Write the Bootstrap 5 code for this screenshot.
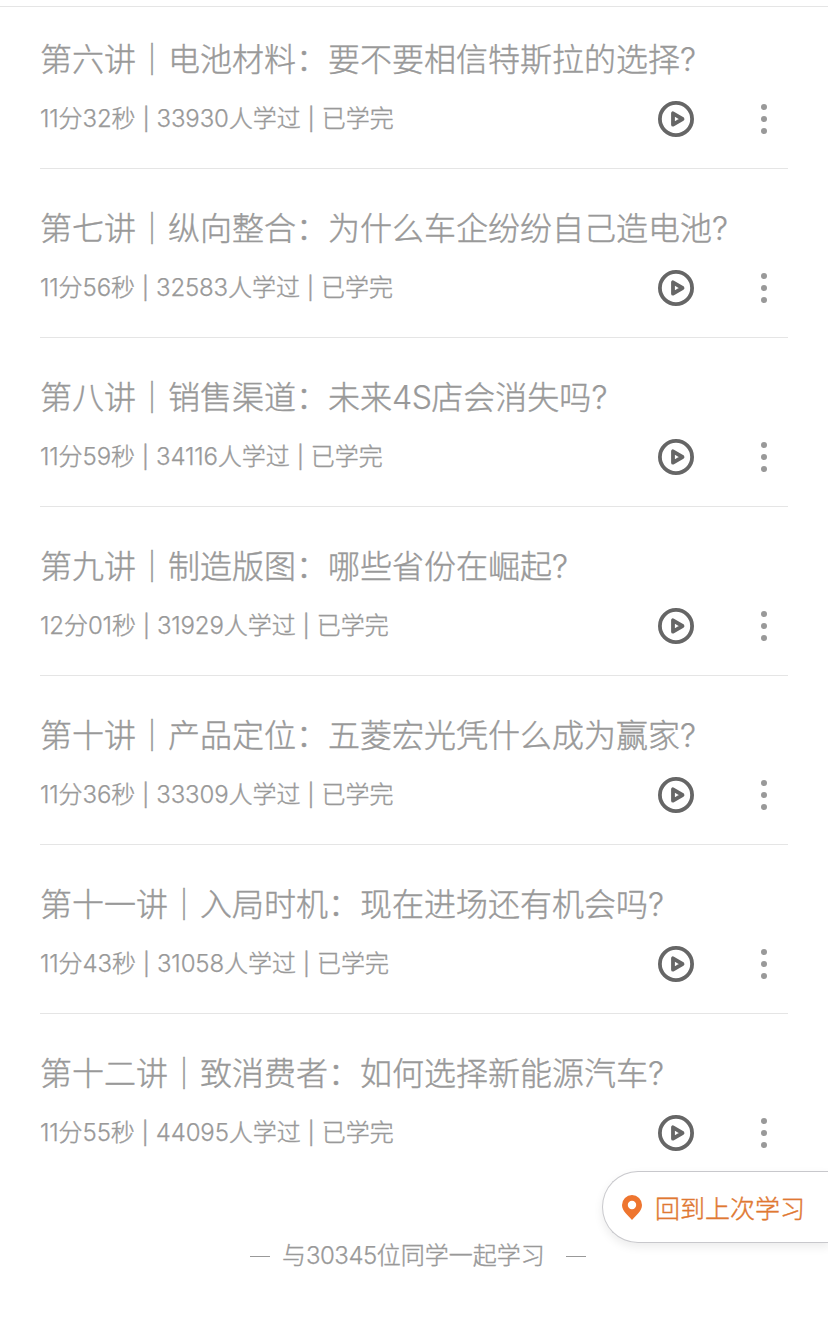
<!DOCTYPE html>
<html lang="zh-CN">
<head>
<meta charset="utf-8">
<meta name="viewport" content="width=device-width, initial-scale=1">
<title>课程目录</title>
<link rel="stylesheet" href="https://cdn.jsdelivr.net/npm/bootstrap@5.3.0/dist/css/bootstrap.min.css">
<style>
body{font-family:"Noto Sans CJK SC",sans-serif;font-weight:300;-webkit-text-stroke:.4px currentColor;color:#999;background:#fff;overflow-x:hidden}
.page{min-height:1342px;padding-top:6px}
.lessons{border-top:1px solid #e5e5e5;padding:0 40px}
.lesson{height:169px;padding-top:33px;border-bottom:1px solid #e5e5e5}
.lesson:first-child{height:162px;padding-top:26px}
.lesson:last-child{border-bottom:0}
.lesson-title{font-size:32px;line-height:48px;height:48px;font-weight:300;margin:0 0 20px;white-space:nowrap}
.meta{font-size:24px;line-height:36px;height:36px;white-space:nowrap}
.meta>span{height:40px}
.num{font-family:Inter,sans-serif;font-weight:300;letter-spacing:-.15px;line-height:1;-webkit-text-stroke:.25px currentColor}
.lesson-title .num{letter-spacing:-.5px}
.sep{width:21px;text-align:center;font-family:Inter,sans-serif;font-size:22px;line-height:40px}
.tools{gap:66px;padding-right:20px}
.together{font-size:24px;line-height:36px;margin-top:53px;padding-left:250px}
.together .num{letter-spacing:-.5px}
.together-text{margin:0 21px 0 12px}
.dash{width:20px;height:1px;background:#999;margin-top:4px}
.back-last{top:1171px;right:-2px;width:228px;height:72px;border:1px solid #c8c8cc;border-right:0;border-radius:36px 0 0 36px;background:#fff;box-shadow:0 4px 10px rgba(0,0,0,.08);color:#e07832;font-size:25px;line-height:36px;padding-left:19px;gap:13px}
.back-last span{padding-bottom:1px}
</style>
</head>
<body>
<svg class="d-none">
  <symbol id="play" viewBox="0 0 36 36"><circle cx="18" cy="18" r="16.1" fill="none" stroke="#666" stroke-width="3.8"/><path d="M15 12.3v11.4L24.500 18z" fill="none" stroke="#666" stroke-width="3.8" stroke-linejoin="round"/></symbol>
  <symbol id="more" viewBox="0 0 8 32"><g fill="#999"><circle cx="4" cy="4" r="3"/><circle cx="4" cy="16" r="3"/><circle cx="4" cy="28" r="3"/></g></symbol>
</svg>
<main class="page position-relative">
  <div class="lessons">
    <article class="lesson">
      <h2 class="lesson-title">第六讲｜电池材料：要不要相信特斯拉的选择<span class="num">?</span></h2>
      <div class="meta d-flex align-items-center"><span><span class="num">11</span>分<span class="num">32</span>秒</span><span class="sep">|</span><span><span class="num">33930</span>人学过</span><span class="sep">|</span><span>已学完</span>
        <div class="tools d-flex align-items-center ms-auto"><svg width="36" height="36"><use href="#play"/></svg><svg width="8" height="32"><use href="#more"/></svg></div></div>
    </article>
    <article class="lesson">
      <h2 class="lesson-title">第七讲｜纵向整合：为什么车企纷纷自己造电池<span class="num">?</span></h2>
      <div class="meta d-flex align-items-center"><span><span class="num">11</span>分<span class="num">56</span>秒</span><span class="sep">|</span><span><span class="num">32583</span>人学过</span><span class="sep">|</span><span>已学完</span>
        <div class="tools d-flex align-items-center ms-auto"><svg width="36" height="36"><use href="#play"/></svg><svg width="8" height="32"><use href="#more"/></svg></div></div>
    </article>
    <article class="lesson">
      <h2 class="lesson-title">第八讲｜销售渠道：未来<span class="num">4S</span>店会消失吗<span class="num">?</span></h2>
      <div class="meta d-flex align-items-center"><span><span class="num">11</span>分<span class="num">59</span>秒</span><span class="sep">|</span><span><span class="num">34116</span>人学过</span><span class="sep">|</span><span>已学完</span>
        <div class="tools d-flex align-items-center ms-auto"><svg width="36" height="36"><use href="#play"/></svg><svg width="8" height="32"><use href="#more"/></svg></div></div>
    </article>
    <article class="lesson">
      <h2 class="lesson-title">第九讲｜制造版图：哪些省份在崛起<span class="num">?</span></h2>
      <div class="meta d-flex align-items-center"><span><span class="num">12</span>分<span class="num">01</span>秒</span><span class="sep">|</span><span><span class="num">31929</span>人学过</span><span class="sep">|</span><span>已学完</span>
        <div class="tools d-flex align-items-center ms-auto"><svg width="36" height="36"><use href="#play"/></svg><svg width="8" height="32"><use href="#more"/></svg></div></div>
    </article>
    <article class="lesson">
      <h2 class="lesson-title">第十讲｜产品定位：五菱宏光凭什么成为赢家<span class="num">?</span></h2>
      <div class="meta d-flex align-items-center"><span><span class="num">11</span>分<span class="num">36</span>秒</span><span class="sep">|</span><span><span class="num">33309</span>人学过</span><span class="sep">|</span><span>已学完</span>
        <div class="tools d-flex align-items-center ms-auto"><svg width="36" height="36"><use href="#play"/></svg><svg width="8" height="32"><use href="#more"/></svg></div></div>
    </article>
    <article class="lesson">
      <h2 class="lesson-title">第十一讲｜入局时机：现在进场还有机会吗<span class="num">?</span></h2>
      <div class="meta d-flex align-items-center"><span><span class="num">11</span>分<span class="num">43</span>秒</span><span class="sep">|</span><span><span class="num">31058</span>人学过</span><span class="sep">|</span><span>已学完</span>
        <div class="tools d-flex align-items-center ms-auto"><svg width="36" height="36"><use href="#play"/></svg><svg width="8" height="32"><use href="#more"/></svg></div></div>
    </article>
    <article class="lesson">
      <h2 class="lesson-title">第十二讲｜致消费者：如何选择新能源汽车<span class="num">?</span></h2>
      <div class="meta d-flex align-items-center"><span><span class="num">11</span>分<span class="num">55</span>秒</span><span class="sep">|</span><span><span class="num">44095</span>人学过</span><span class="sep">|</span><span>已学完</span>
        <div class="tools d-flex align-items-center ms-auto"><svg width="36" height="36"><use href="#play"/></svg><svg width="8" height="32"><use href="#more"/></svg></div></div>
    </article>
  </div>
  <div class="together d-flex align-items-center"><span class="dash"></span><span class="together-text">与<span class="num">30345</span>位同学一起学习</span><span class="dash"></span></div>
  <div class="back-last position-absolute d-flex align-items-center">
    <svg width="20" height="25" viewBox="0 0 20 25"><path fill="#ee752f" fill-rule="evenodd" d="M10 0a10 10 0 0 0-10 10c0 6 6 10.500 10 15 4-4.500 10-9 10-15A10 10 0 0 0 10 0zm0 5.800a4.200 4.200 0 1 1 0 8.400 4.200 4.200 0 0 1 0-8.400z"/></svg>
    <span>回到上次学习</span>
  </div>
</main>
<script src="https://cdn.jsdelivr.net/npm/bootstrap@5.3.0/dist/js/bootstrap.bundle.min.js"></script>
</body>
</html>
